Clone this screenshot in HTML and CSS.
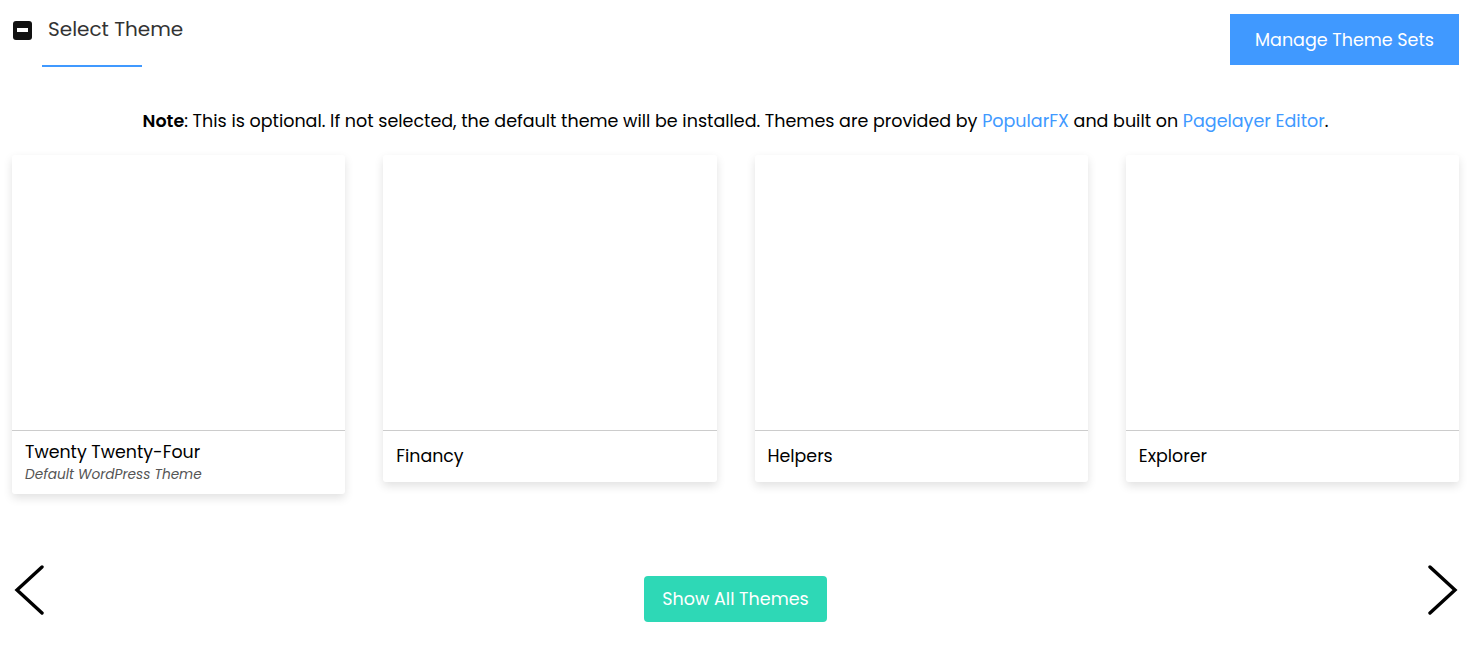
FILE: index.html
```html
<!DOCTYPE html>
<html lang="en">

<head>
    <meta charset="UTF-8">
    <meta name="viewport" content="width=device-width, initial-scale=1.0">
    <title>Select Theme</title>
    <link rel="stylesheet" href="styles.css">
</head>

<body>
    <div class="page">
        <div class="header">
            <div class="tab">
                <div class="tab_row">
                    <span class="toggle"><span class="bar"></span></span>
                    <span class="tab_title">Select Theme</span>
                </div>
                <div class="tab_line"></div>
            </div>
            <button class="manage">Manage Theme Sets</button>
        </div>

        <p class="note"><b>Note</b>: This is optional. If not selected, the default theme will be installed. Themes are provided by <a href="#">PopularFX</a> and built on <a href="#">Pagelayer Editor</a>.</p>

        <div class="cards">
            <div class="card">
                <div class="shot"></div>
                <div class="card_foot has_sub">
                    <div class="name">Twenty Twenty-Four</div>
                    <div class="sub">Default WordPress Theme</div>
                </div>
            </div>
            <div class="card">
                <div class="shot"></div>
                <div class="card_foot">
                    <div class="name">Financy</div>
                </div>
            </div>
            <div class="card">
                <div class="shot"></div>
                <div class="card_foot">
                    <div class="name">Helpers</div>
                </div>
            </div>
            <div class="card">
                <div class="shot"></div>
                <div class="card_foot">
                    <div class="name">Explorer</div>
                </div>
            </div>
        </div>

        <div class="bottom">
            <span class="arrow">
                <svg width="32" height="50" viewBox="0 0 32 50"><polyline points="29,2 4,25 29,48" fill="none" stroke="#000" stroke-width="3.4" stroke-linecap="round" stroke-linejoin="miter"/></svg>
            </span>
            <button class="show_all">Show All Themes</button>
            <span class="arrow">
                <svg width="32" height="50" viewBox="0 0 32 50"><polyline points="3,2 28,25 3,48" fill="none" stroke="#000" stroke-width="3.4" stroke-linecap="round" stroke-linejoin="miter"/></svg>
            </span>
        </div>
    </div>
</body>

</html>
```

FILE: styles.css
```css
body {
    margin: 0;
    background-color: #fff;
    font-family: "Poppins", "Open Sans", sans-serif;
    color: #000;
}

.page {
    padding: 0 15px 0 12px;
}

.header {
    display: flex;
    justify-content: space-between;
    align-items: flex-start;
}

.tab {
    padding-top: 17px;
}

.tab_row {
    display: flex;
    align-items: center;
    height: 24px;
}

.toggle {
    display: flex;
    justify-content: center;
    align-items: center;
    width: 19px;
    height: 19px;
    margin-left: 1px;
    margin-top: 2px;
    background: #111;
    border-radius: 3px;
}

.bar {
    width: 11px;
    height: 4px;
    background: #fff;
}

.tab_title {
    margin-left: 16px;
    font-size: 20px;
    color: #333;
}

.tab_line {
    width: 100px;
    height: 2px;
    margin-left: 30px;
    margin-top: 24px;
    background: #4099ff;
}

.manage {
    margin-top: 14px;
    width: 229px;
    height: 51px;
    border: none;
    background: #4099ff;
    color: #fff;
    font-family: inherit;
    font-size: 17.5px;
}

.note {
    margin: 40px 0 0 0;
    text-align: center;
    font-size: 17.5px;
    line-height: 28px;
}

.note b {
    font-weight: 600;
}

.note a {
    color: #4099ff;
    text-decoration: none;
}

.cards {
    display: flex;
    align-items: flex-start;
    gap: 38px;
    margin-top: 20px;
}

.card {
    flex: 1;
    background: #fff;
    border-radius: 3px;
    box-shadow: 0 4px 10px rgba(0, 0, 0, 0.12);
}

.shot {
    height: 275px;
    border-bottom: 1px solid #ccc;
}

.card_foot {
    padding: 12px 13px;
}

.card_foot.has_sub {
    padding: 8px 13px 10px 13px;
}

.name {
    font-size: 17.4px;
    line-height: 27px;
}

.sub {
    font-size: 13.7px;
    font-style: italic;
    color: #555;
    line-height: 18px;
}

.bottom {
    display: flex;
    justify-content: space-between;
    align-items: center;
    margin-top: 64px;
}

.arrow {
    display: flex;
    margin-left: 1px;
}

.show_all {
    margin-top: 18px;
    width: 183px;
    height: 46px;
    border: none;
    border-radius: 4px;
    background: #2ed8b6;
    color: #fff;
    font-family: inherit;
    font-size: 17.5px;
}
```
